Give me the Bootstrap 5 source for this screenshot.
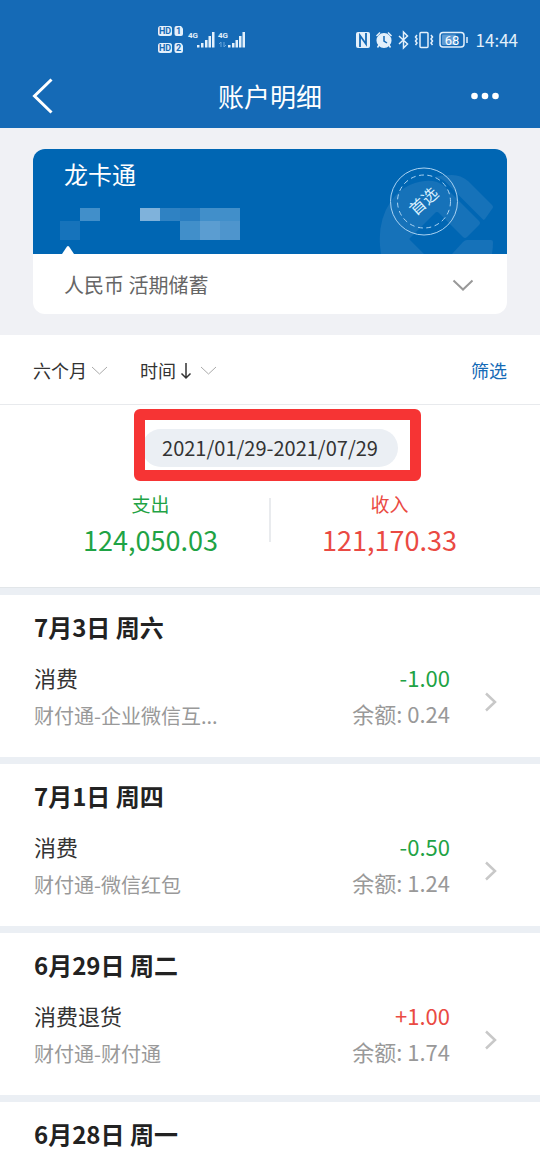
<!DOCTYPE html>
<html lang="zh-CN">
<head>
<meta charset="utf-8">
<meta name="viewport" content="width=device-width, initial-scale=1">
<title>账户明细</title>
<link href="https://cdn.jsdelivr.net/npm/bootstrap@5.3.0/dist/css/bootstrap.min.css" rel="stylesheet">
<style>
  :root { --brand: #156ab6; --gap-bg: #ebeff4; --out: #1fa345; --in: #ea4a43; }
  body { font-family: "Noto Sans CJK SC", sans-serif; background: #fff; color: #333; overflow-x: hidden; }
  button { font-family: inherit; }
  svg { display: block; flex: none; }
  .plain { border: 0; background: none; padding: 0; color: inherit; }
  .app-head { background: var(--brand); color: #fff; }
  .status { height: 64px; padding: 16px 22px 0 0; }
  .signals { margin-left: 30%; }
  .indicators { padding-top: 12px; }
  .clock { font-size: 17px; line-height: 24px; color: #e3f0fb; }
  .title-bar { height: 64px; padding: 0 40px 0 32px; }
  .title-bar h1 { font-size: 26px; line-height: 36px; font-weight: 400; }
  .title-bar .side-start { width: 38px; }
  .title-bar .side-end { width: 30px; }
  .account { background: #f0f1f5; padding: 21px 33px; }
  .account-card { border-radius: 12px; background: #fff; overflow: hidden; }
  .account-top { background: #0066b3; color: #fff; height: 105px; padding: 7px 27px 0; }
  .account-top h2 { font-size: 24px; line-height: 36px; font-weight: 400; }
  .stamp { right: 12px; top: 0; }
  .notch { left: 29px; bottom: 0; }
  .account-kind { height: 60px; padding: 2px 33px 0 31px; font-size: 20px; color: #666; }
  .filters { height: 70px; padding: 2px 33px 0; font-size: 18px; border-bottom: 1px solid #e8eaed; }
  .filter-set { gap: 32px; }
  .filters a { color: var(--brand); }
  .summary { padding: 24px 32px 29px; border-bottom: 1px solid #e2e6e9; }
  .period { background: var(--gap-bg); border-radius: 20px; font-size: 20px; line-height: 38px; padding: 0 20px; }
  .marker { inset: -20px -23px -14px -8px; border: 11px solid #f63434; border-radius: 6px; pointer-events: none; }
  .totals { margin-top: 19px; }
  .totals dt { font-size: 19px; line-height: 36px; font-weight: 400; }
  .totals dd { font-size: 27px; line-height: 36px; }
  .totals .rule { width: 2px; height: 44px; background: #e9ebee; margin-bottom: 4px; }
  .out { color: var(--out); }
  .in { color: var(--in); }
  .day { border-top: 7px solid var(--gap-bg); padding: 16px 43px 20px 34px; }
  .day h3 { font-size: 24px; line-height: 32px; font-weight: 700; color: #222; margin-bottom: 16px; }
  .entry { gap: 35px; line-height: 36px; font-size: 22px; color: #333; }
  .memo { font-size: 20px; line-height: 42px; color: #999; }
  .balance { color: #999; }
</style>
</head>
<body>
<header class="app-head">
  <div class="status d-flex align-items-start justify-content-between">
    <svg class="signals" width="90" height="48" viewBox="-5 1 90 48" overflow="visible" aria-hidden="true" font-family="Roboto, sans-serif" font-weight="700">
      <g fill="#e3f0fb">
        <rect x="-2" y="11" width="14" height="10" rx="2.5"/><path d="M16.500 11H21l2 2.500V19q0 2-2 2h-4.500q-2 0-2-2v-6q0-2 2-2z"/>
        <rect x="-2" y="28" width="14" height="10" rx="2.5"/><path d="M16.500 28H21l2 2.500V36q0 2-2 2h-4.500q-2 0-2-2v-6q0-2 2-2z"/>
        <text x="28" y="23" font-size="8">4G</text><text x="58" y="23" font-size="8">4G</text>
        <path d="M37 30h2.500v2.500H37zM41 28h2.500v4.500H41zM45 25h2.500v7.500H45zM48.500 21H51v11.500h-2.500zM52 17h2.500v15.500H52z"/>
        <path d="M68 30h2.500v2.500H68zM72 28h2.500v4.500H72zM75.500 25H78v7.500h-2.500zM79 21h2.500v11.500H79zM82.500 17H85v15.500h-2.500z"/>
      </g>
      <g fill="#156ab6" font-size="9"><text x="-1" y="19">HD</text><text x="16" y="19">1</text><text x="-1" y="36">HD</text><text x="16" y="36">2</text></g>
      <path d="M61 32v-5l-2 2M64 27v5l2-2" fill="none" stroke="#6ba6dc"/>
    </svg>
    <div class="indicators d-flex align-items-center gap-2">
      <svg width="114" height="20" viewBox="0 0 114 20" aria-hidden="true" fill="none" stroke="#e3f0fb" stroke-width="1.5">
        <path d="M4 2h10q2 0 2 2v12q0 2-2 2H4q-2 0-2-2V4q0-2 2-2z" fill="#e3f0fb" stroke="none"/>
        <path d="M6 17V5.500l6 8.500V3" stroke="#156ab6" stroke-width="1.8"/>
        <circle cx="30" cy="10.5" r="6.8" fill="#e3f0fb"/><path d="M30 6v5l3 2" stroke="#156ab6"/>
        <path d="M22.500 6L26 2.500M37.500 6L34 2.500M25 15l-1.500 2.500M35 15l1.500 2.500"/>
        <path d="M45 6l8.500 8-4 4V2l4 4L45 14"/>
        <rect x="66" y="2.5" width="8" height="15" rx="1"/><path d="M63 5l-1.500 2L63 9l-1.500 2L63 13l-1.500 2M77 5l1.500 2L77 9l1.500 2L77 13l1.500 2"/>
        <rect x="86" y="2.5" width="24" height="14.5" rx="3"/><rect x="88" y="4.5" width="14" height="10.5" rx="1" fill="#5d9ad3" stroke="none"/>
        <path d="M113 7v6"/>
        <text x="98" y="14.5" fill="#fff" stroke="none" text-anchor="middle" font-size="13" font-family="Roboto, sans-serif">68</text>
      </svg>
      <span class="clock">14:44</span>
    </div>
  </div>
  <div class="title-bar d-flex align-items-center justify-content-between">
    <button class="plain side-start" aria-label="返回"><svg width="22" height="36" viewBox="0 0 22 36"><path d="M19.500 1.500L2.500 18l17 16.500" fill="none" stroke="#fff" stroke-width="3"/></svg></button>
    <h1 class="m-0">账户明细</h1>
    <button class="plain side-end" aria-label="更多"><svg width="30" height="8" viewBox="0 0 30 8" fill="#fff"><circle cx="4.5" cy="4" r="3.3"/><circle cx="15" cy="4" r="3.3"/><circle cx="25.5" cy="4" r="3.3"/></svg></button>
  </div>
</header>

<main>
  <section class="account">
    <div class="account-card">
      <div class="account-top position-relative">
        <h2 class="ps-1 mb-3">龙卡通</h2>
        <svg width="180" height="32" viewBox="0 0 180 32" shape-rendering="crispEdges" aria-hidden="true">
          <path fill="#418fca" d="M20 0h20v13H20zM140 0h40v13h-40zM120 13h20v19h-20z"/>
          <path fill="#1673bb" d="M0 13h20v19H0z"/><path fill="#7fb2db" d="M80 0h20v13H80z"/>
          <path fill="#2f82c3" d="M100 0h20v13h-20z"/><path fill="#2a7ec1" d="M120 0h20v13h-20z"/>
          <path fill="#5b9dd1" d="M140 13h20v19h-20z"/><path fill="#4e95cd" d="M160 13h20v19h-20z"/>
        </svg>
        <svg class="stamp position-absolute" width="116" height="105" viewBox="0 0 116 105">
          <g fill="#1672b9">
            <path d="M2 105Q-3 74 12 52 25 34 46 32 58 31 65 37L100 72q2 2 0 4L88 88q-2 2-4 0L60 64q-2-2-4 0L31 89q-1 1 0 2L45 105z"/>
            <path d="M56 28q6-2 17-2 9 0 16 6l24 24q2 2 0 4L106 70q-2 2-4 0L69 36Q63 30 56 28z"/>
            <path d="M73 105L84 93q2-2 4-2h24q2 0 2 2 0 6-1 12z"/>
          </g>
          <path d="M58 30q6 1 10 6l36 36" fill="none" stroke="#0066b3" stroke-width="2"/>
          <g fill="none" stroke="#a9d2f2"><circle cx="45" cy="52.5" r="33.5"/><circle cx="45" cy="52.5" r="26.5" stroke-dasharray="5 3.5"/></g>
          <text x="45" y="58" text-anchor="middle" transform="rotate(-42 45 52.5)" font-size="16" fill="#d8f0ff">首选</text>
        </svg>
        <svg class="notch position-absolute" width="12" height="8" viewBox="0 0 12 8"><path d="M0 8L5 .500q1-1 2 0L12 8z" fill="#fff"/></svg>
      </div>
      <button class="plain account-kind w-100 d-flex align-items-center justify-content-between">
        <span>人民币 活期储蓄</span>
        <svg width="22" height="12" viewBox="0 0 22 12"><path d="M1.500 1.500L11 10.500l9.500-9" fill="none" stroke="#999" stroke-width="2"/></svg>
      </button>
    </div>
  </section>

  <nav class="filters d-flex align-items-center justify-content-between">
    <div class="filter-set d-flex">
      <button class="plain d-flex align-items-center gap-1">六个月 <svg width="17" height="10" viewBox="0 0 17 10"><path d="M1 1l7.500 7L16 1" fill="none" stroke="#aaa"/></svg></button>
      <button class="plain d-flex align-items-center gap-2"><span class="d-flex align-items-center gap-1">时间<svg width="12" height="18" viewBox="0 0 12 18" role="img" aria-label="降序"><path d="M6 1v15M1.500 11.500L6 16l4.500-4.500" fill="none" stroke="#333" stroke-width="1.5"/></svg></span><svg width="17" height="10" viewBox="0 0 17 10"><path d="M1 1l7.500 7L16 1" fill="none" stroke="#aaa"/></svg></button>
    </div>
    <a href="#" class="text-decoration-none">筛选</a>
  </nav>

  <section class="summary">
    <div class="d-flex justify-content-center">
      <div class="period position-relative">2021/01/29-2021/07/29<div class="marker position-absolute"></div></div>
    </div>
    <div class="totals d-flex align-items-center text-center">
      <dl class="m-0 flex-fill w-50 out"><dt>支出</dt><dd class="m-0">124,050.03</dd></dl>
      <div class="rule"></div>
      <dl class="m-0 flex-fill w-50 in"><dt>收入</dt><dd class="m-0">121,170.33</dd></dl>
    </div>
  </section>

  <section class="day">
    <h3>7月3日 周六</h3>
    <a href="#" class="entry d-flex align-items-start text-decoration-none">
      <div class="flex-grow-1"><div>消费</div><div class="memo">财付通-企业微信互...</div></div>
      <div class="text-end"><div class="out">-1.00</div><div class="balance">余额: 0.24</div></div>
      <svg class="mt-2 align-self-center" width="12" height="20" viewBox="0 0 12 20"><path d="M1 1.500L10 10l-9 8.500" fill="none" stroke="#c8c8c8" stroke-width="2.5"/></svg>
    </a>
  </section>
  <section class="day">
    <h3>7月1日 周四</h3>
    <a href="#" class="entry d-flex align-items-start text-decoration-none">
      <div class="flex-grow-1"><div>消费</div><div class="memo">财付通-微信红包</div></div>
      <div class="text-end"><div class="out">-0.50</div><div class="balance">余额: 1.24</div></div>
      <svg class="mt-2 align-self-center" width="12" height="20" viewBox="0 0 12 20"><path d="M1 1.500L10 10l-9 8.500" fill="none" stroke="#c8c8c8" stroke-width="2.5"/></svg>
    </a>
  </section>
  <section class="day">
    <h3>6月29日 周二</h3>
    <a href="#" class="entry d-flex align-items-start text-decoration-none">
      <div class="flex-grow-1"><div>消费退货</div><div class="memo">财付通-财付通</div></div>
      <div class="text-end"><div class="in">+1.00</div><div class="balance">余额: 1.74</div></div>
      <svg class="mt-2 align-self-center" width="12" height="20" viewBox="0 0 12 20"><path d="M1 1.500L10 10l-9 8.500" fill="none" stroke="#c8c8c8" stroke-width="2.5"/></svg>
    </a>
  </section>
  <section class="day pb-0">
    <h3>6月28日 周一</h3>
  </section>
</main>
<script src="https://cdn.jsdelivr.net/npm/bootstrap@5.3.0/dist/js/bootstrap.bundle.min.js"></script>
</body>
</html>
